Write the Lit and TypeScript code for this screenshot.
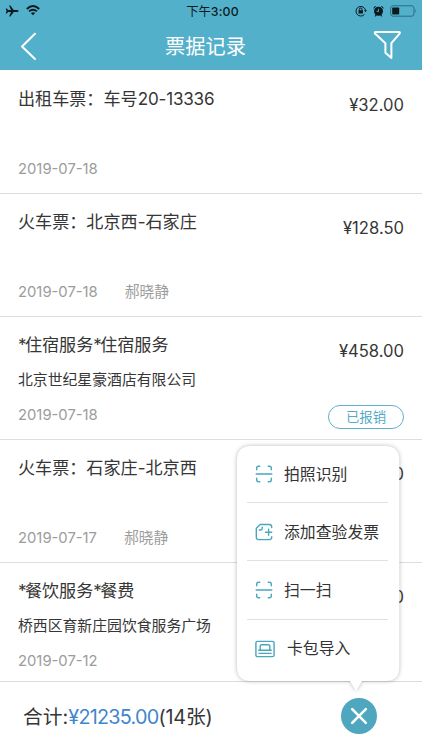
import { LitElement, html, css, svg, nothing } from "lit";
import { customElement, property } from "lit/decorators.js";

interface Ticket {
  title: string;
  company?: string;
  date: string;
  owner?: string;
  amount: string;
  status?: string;
}

const tickets: Ticket[] = [
  { title: "出租车票：车号20-13336", date: "2019-07-18", amount: "¥32.00" },
  { title: "火车票：北京西-石家庄", date: "2019-07-18", owner: "郝晓静", amount: "¥128.50" },
  { title: "*住宿服务*住宿服务", company: "北京世纪星豪酒店有限公司", date: "2019-07-18", amount: "¥458.00", status: "已报销" },
  { title: "火车票：石家庄-北京西", date: "2019-07-17", owner: "郝晓静", amount: "¥0" },
  { title: "*餐饮服务*餐费", company: "桥西区育新庄园饮食服务广场", date: "2019-07-12", amount: "¥0" },
];

const scanIcon = svg`<svg width="18" height="18" viewBox="0 0 18 18" fill="none" stroke="#4aa6bf" stroke-width="1.4" stroke-linecap="round">
  <path d="M1.7 4.8V3.2Q1.7 1.3 3.6 1.3H4.7M13.3 1.3h1.1q1.9 0 1.9 1.9v1.6M1.7 13.2v1.6q0 1.9 1.9 1.9h1.1M13.3 16.7h1.1q1.9 0 1.9-1.9v-1.6M1.2 9h15.6"/></svg>`;
const addIcon = svg`<svg width="18" height="18" viewBox="0 0 18 18" fill="none" stroke="#4aa6bf" stroke-width="1.4" stroke-linecap="round" stroke-linejoin="round">
  <path d="M16.7 4.6V3.8Q16.7 1.5 14.4 1.5H5.2L1.3 5.2V14.3Q1.3 16.6 3.6 16.6H14.4Q16.7 16.6 16.7 14.3V13.8M7.2 4.2V5.6Q7.2 7 5.8 7H4.3M13.6 6.1v6.2M10.5 9.2h6.2"/></svg>`;
const cardIcon = svg`<svg width="20" height="18" viewBox="0 0 20 18" fill="none" stroke="#4aa6bf" stroke-width="1.4" stroke-linejoin="round">
  <rect x=".9" y="1.4" width="18.2" height="15.2" rx="1.6"/>
  <path d="M5.2 10V6.2Q5.2 4.8 6.6 4.8H13.4Q14.8 4.8 14.8 6.2V10M3.2 10.2H16.8M3.4 13.4H16.6"/></svg>`;

const actions = [
  { label: "拍照识别", icon: scanIcon, kind: "" },
  { label: "添加查验发票", icon: addIcon, kind: "" },
  { label: "扫一扫", icon: scanIcon, kind: "" },
  { label: "卡包导入", icon: cardIcon, kind: "wide" },
];

// Latin runs are set slightly tighter than the Chinese text around them.
const tightenLatin = (text: string) =>
  text
    .split(/(\*|[0-9][0-9-]+)/)
    .filter(Boolean)
    .map((part) =>
      part === "*"
        ? html`<span class="star">${part}</span>`
        : /^[0-9]/.test(part)
          ? html`<span class="digits">${part}</span>`
          : part,
    );

@customElement("ticket-row")
class TicketRow extends LitElement {
  @property({ attribute: false }) ticket!: Ticket;

  static styles = css`
    :host { display: flex; justify-content: space-between; box-sizing: border-box; flex: none; height: 123px; padding: 0 18px; border-bottom: 1px solid #dedede; background: #fff; }
    .info { display: grid; grid-template-rows: 35px 36px 34px; padding-top: 10px; align-items: center; white-space: nowrap; }
    .title { font-size: 17.1px; line-height: 26px; color: #363636; }
    .star { letter-spacing: -1.7px; }
    .digits { letter-spacing: -0.2px; }
    .company { font-size: 14.85px; line-height: 22px; color: #363636; }
    .meta { display: flex; align-items: baseline; gap: 27px; font-size: 14.8px; line-height: 22px; color: #9c9c9c; }
    .side { display: flex; flex-direction: column; align-items: flex-end; padding-top: 22px; }
    .amount { font-size: 16.6px; line-height: 24px; color: #363636; }
    .status { box-sizing: border-box; width: 76px; height: 24px; margin-top: 42px; border: 1.3px solid #5fb2c9; border-radius: 12px; color: #53abc4; font-size: 13.4px; line-height: 23px; text-align: center; }
  `;

  render() {
    const t = this.ticket;
    return html`
      <div class="info">
        <div class="title">${tightenLatin(t.title)}</div>
        <div class="company">${t.company ?? nothing}</div>
        <div class="meta"><span>${t.date}</span>${t.owner ? html`<span>${t.owner}</span>` : nothing}</div>
      </div>
      <div class="side">
        <div class="amount">${t.amount}</div>
        ${t.status ? html`<div class="status">${t.status}</div>` : nothing}
      </div>`;
  }
}

@customElement("action-menu")
class ActionMenu extends LitElement {
  static styles = css`
    :host { display: block; position: relative; width: 162px; height: 246px; }
    .bubble { position: absolute; left: -6px; top: -6px; filter: drop-shadow(0 0 2px rgba(0, 0, 0, 0.28)); }
    .list { position: relative; padding: 0 11px 0 10px; }
    .item { display: flex; align-items: center; box-sizing: border-box; height: 58.2px; padding-left: 8px; gap: 11px; font-size: 15.85px; line-height: 24px; color: #333; border-bottom: 1.3px solid #e1e1e1; }
    .item:first-child { height: 57.2px; }
    .item:last-child { border-bottom: 0; }
    .label { padding-top: 1.5px; }
    svg { display: block; flex: none; }
    .wide { gap: 12px; }
  `;

  render() {
    return html`
      <svg class="bubble" width="174" height="258" viewBox="-6 -6 174 258">
        <path fill="#fff" d="M14 0H148.3Q162.3 0 162.3 14V221Q162.3 235 148.3 235H125L119 245L113 235H14Q0 235 0 221V14Q0 0 14 0Z"/>
      </svg>
      <div class="list">
        ${actions.map((a) => html`<div class="item ${a.kind}">${a.icon}<span class="label">${a.label}</span></div>`)}
      </div>`;
  }
}

@customElement("app-root")
class AppRoot extends LitElement {
  static styles = css`
    :host { display: flex; flex-direction: column; position: relative; width: 422px; height: 750px; overflow: hidden; background: #fff; font-family: Inter, "Noto Sans CJK SC", sans-serif; font-weight: 400; }
    svg { display: block; flex: none; }
    header { flex: none; height: 70px; background: #53b0ca; }
    .status { display: grid; grid-template-columns: 1fr auto 1fr; align-items: center; height: 21px; padding: 0 5px; font-size: 12.3px; color: #0a1a20; }
    .clock { font-weight: 500; letter-spacing: 0.2px; }
    .time { padding-left: 3px; }
    .left, .right { display: flex; align-items: center; }
    .left { gap: 7px; }
    .right { justify-content: flex-end; gap: 6px; }
    .bar { display: grid; grid-template-columns: 40px 1fr 40px; align-items: center; height: 49px; padding: 0 18px 0 7px; }
    h1 { margin: 2px 0 0; text-align: center; font-size: 20.2px; font-weight: 400; line-height: 30px; color: #fff; }
    .back { justify-self: end; margin-right: 7px; }
    .filter { justify-self: end; margin-bottom: 2px; }
    main { display: flex; flex-direction: column; flex: 1; min-height: 0; padding-top: 1px; overflow: hidden; }
    footer { display: flex; align-items: center; justify-content: space-between; box-sizing: border-box; flex: none; height: 69px; border-top: 1.4px solid #dcdcdc; padding: 0 45px 0 23px; background: #fff; }
    .total { margin-bottom: 2px; font-size: 19.8px; color: #363636; white-space: nowrap; }
    .sum { color: #3f86cb; letter-spacing: -0.75px; }
    .count { letter-spacing: -0.2px; }
    action-menu { position: absolute; left: 237px; bottom: 58px; }
  `;

  render() {
    return html`
      <header>
        <div class="status">
          <div class="left">
            <svg width="14" height="12" viewBox="0 0 14 12" fill="#0a1a20"><path d="M13.6 6Q13.6 5.1 12 5.1H8.7L5.4.4H4.1L6 5.1H3.1L1.8 3.4H.7L1.5 6 .7 8.6H1.8L3.1 6.9H6L4.1 11.6H5.4L8.7 6.9H12Q13.6 6.9 13.6 6Z"/></svg>
            <svg width="14" height="11" viewBox="0 0 14 11" fill="none" stroke="#0a1a20" stroke-width="1.9"><path d="M.8 4Q7-1.8 13.2 4M3.1 6.4Q7 2.9 10.9 6.4"/><path d="M4.9 8.1Q7 6.4 9.1 8.1L7 10.3Z" fill="#0a1a20" stroke="none"/></svg>
          </div>
          <div class="time">下午<span class="clock">3:00</span></div>
          <div class="right">
            <svg width="12" height="12" viewBox="0 0 12 12" fill="none" stroke="#0a1a20" stroke-width="1"><path d="M9.4 9.4A4.8 4.8 0 1 1 10.5 5.3"/><path d="M9 5.2H12L10.5 7.3Z" fill="#0a1a20" stroke="none"/><rect x="3.5" y="5.2" width="4.4" height="3.3" fill="#0a1a20" stroke="none"/><path d="M4.4 5.4V4.3Q4.4 3 5.7 3T7 4.3V5.4"/></svg>
            <svg width="11" height="12" viewBox="0 0 11 12" fill="#0a1a20"><circle cx="5.5" cy="6.2" r="4.5"/><path d="M.5 3.5Q.5 1 3.3 1L.9 3.8ZM10.5 3.5Q10.5 1 7.7 1L10.1 3.8ZM1.7 11.2L2.7 9.4 3.7 10.2 2.7 11.4ZM9.3 11.2L8.3 9.4 7.3 10.2 8.3 11.4Z"/><path d="M5.5 3.8V6.6L3.6 6.3" fill="none" stroke="#53b0ca" stroke-width=".9"/></svg>
            <svg width="27" height="12" viewBox="0 0 27 12"><rect x=".6" y=".8" width="23.4" height="10.4" rx="2.4" fill="none" stroke="#276577" stroke-width=".9"/><rect x="2.2" y="2.4" width="7" height="7.2" rx=".8" fill="#0a1a20"/><path d="M25.2 4.2Q26.6 6 25.2 7.8Z" fill="#276577"/></svg>
          </div>
        </div>
        <div class="bar">
          <svg class="back" width="24" height="30" viewBox="0 0 24 30" fill="none" stroke="#fff" stroke-width="2" stroke-linecap="round" stroke-linejoin="round"><path d="M19 2.8L6 15.5L19 28"/></svg>
          <h1>票据记录</h1>
          <svg class="filter" width="34" height="32" viewBox="0 0 34 32" fill="none" stroke="#fff" stroke-width="2" stroke-linejoin="round"><path d="M5.9 3H28.6Q30.8 3 29.4 4.8L21.4 14.2V29L15.4 23.8V14.2L5.2 4.8Q3.9 3 5.9 3Z"/></svg>
        </div>
      </header>
      <main>${tickets.map((t) => html`<ticket-row .ticket=${t}></ticket-row>`)}</main>
      <footer>
        <div class="total">合计:<span class="sum">¥21235.00</span><span class="count">(14张)</span></div>
        <svg width="36" height="36" viewBox="0 0 36 36"><circle cx="18" cy="18" r="18" fill="#4ea6bf"/><path d="M11.2 11.2L24.8 24.8M24.8 11.2L11.2 24.8" stroke="#fff" stroke-width="2.6" stroke-linecap="round"/></svg>
      </footer>
      <action-menu></action-menu>`;
  }
}
